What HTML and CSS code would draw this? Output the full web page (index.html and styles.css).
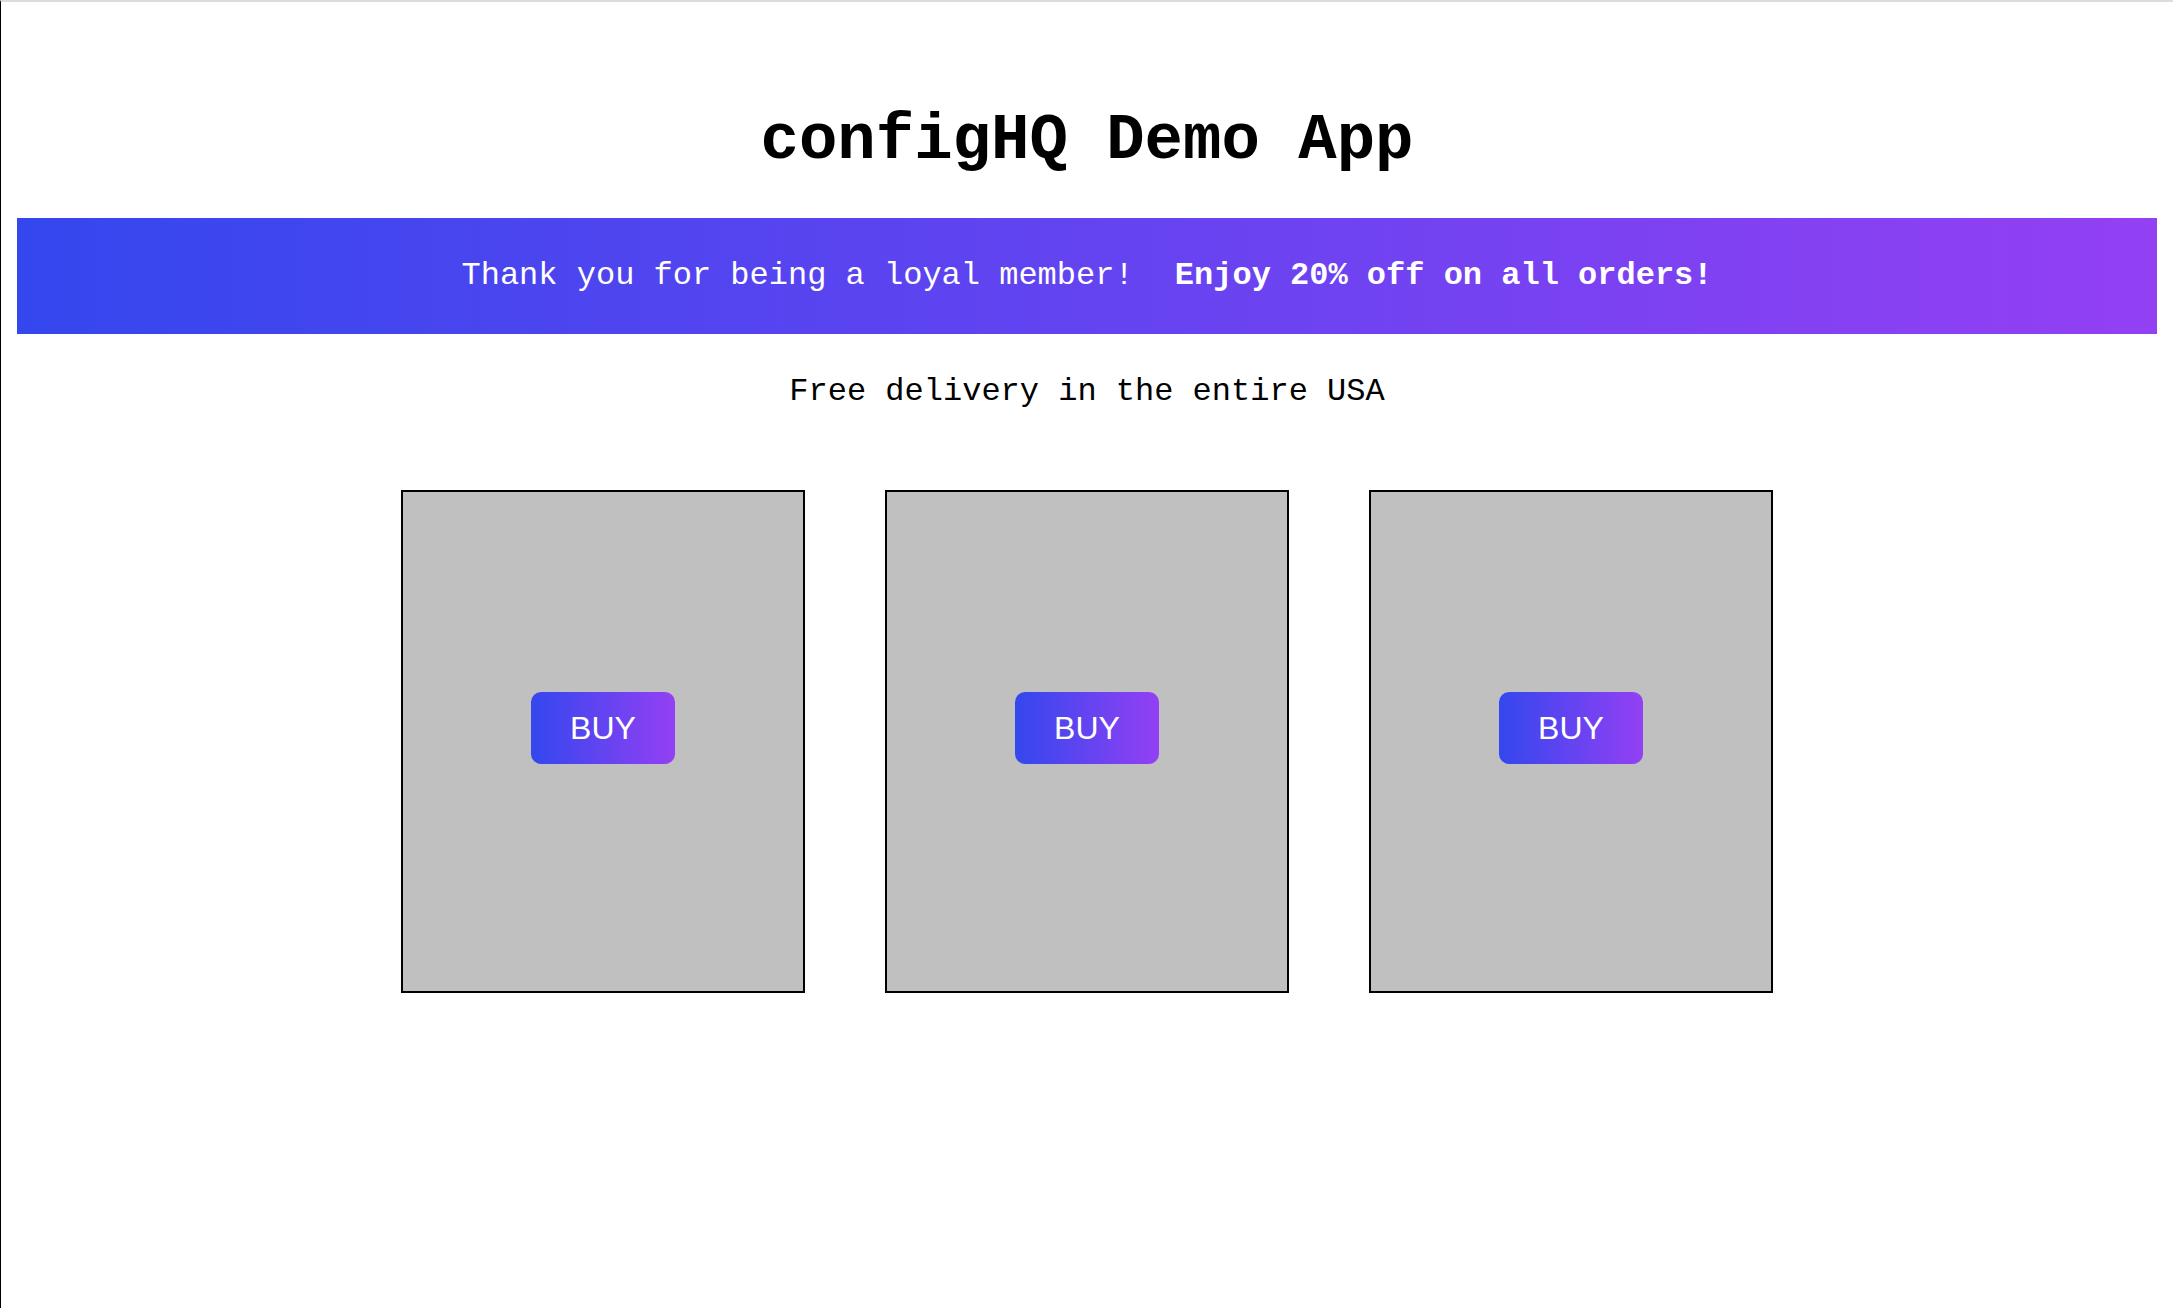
FILE: index.html
```html
<!DOCTYPE html>
<html lang="en">
<head>
<meta charset="utf-8">
<title>configHQ Demo App</title>
<link rel="stylesheet" href="styles.css">
</head>
<body>
  <main class="app">
    <h1 class="title">configHQ Demo App</h1>
    <div class="banner"><span class="banner-msg">Thank you for being a loyal member!</span> <strong class="banner-offer">Enjoy 20% off on all orders!</strong></div>
    <p class="delivery">Free delivery in the entire USA</p>
    <section class="products">
      <div class="card"><button class="buy">BUY</button></div>
      <div class="card"><button class="buy">BUY</button></div>
      <div class="card"><button class="buy">BUY</button></div>
    </section>
  </main>
</body>
</html>
```
FILE: styles.css
```css
html, body {
  margin: 0;
  padding: 0;
  background: #ffffff;
}

body {
  min-height: 1306px;
  border-top: 2px solid #dcdcdf;
  border-left: 1px solid #000000;
  font-family: "Liberation Mono", "Courier New", monospace;
  font-size: 32px;
  color: #000000;
}

.app {
  display: flex;
  flex-direction: column;
  align-items: stretch;
  padding: 0 16px;
}

.title {
  margin: 103px 0 41px;
  font-size: 64px;
  line-height: 72px;
  font-weight: bold;
  text-align: center;
}

.banner {
  padding: 40px 0;
  line-height: 36px;
  text-align: center;
  color: #ffffff;
  background: linear-gradient(to right, #3447ee, #9340f3);
}

.banner-offer {
  margin-left: 22px;
  font-weight: bold;
}

.delivery {
  margin: 40px 0 80px;
  line-height: 36px;
  text-align: center;
}

.products {
  display: flex;
  justify-content: center;
  gap: 80px;
}

.card {
  box-sizing: border-box;
  width: 404px;
  height: 503px;
  padding-top: 200px;
  display: flex;
  justify-content: center;
  align-items: flex-start;
  background: #c0c0c0;
  border: 2px solid #000000;
}

.buy {
  padding: 17px 39px;
  border: none;
  border-radius: 10px;
  font-family: "Liberation Sans", Arial, Helvetica, sans-serif;
  font-size: 32px;
  line-height: 38px;
  color: #ffffff;
  background: linear-gradient(to right, #3447ee, #9340f3);
  cursor: pointer;
}
```
